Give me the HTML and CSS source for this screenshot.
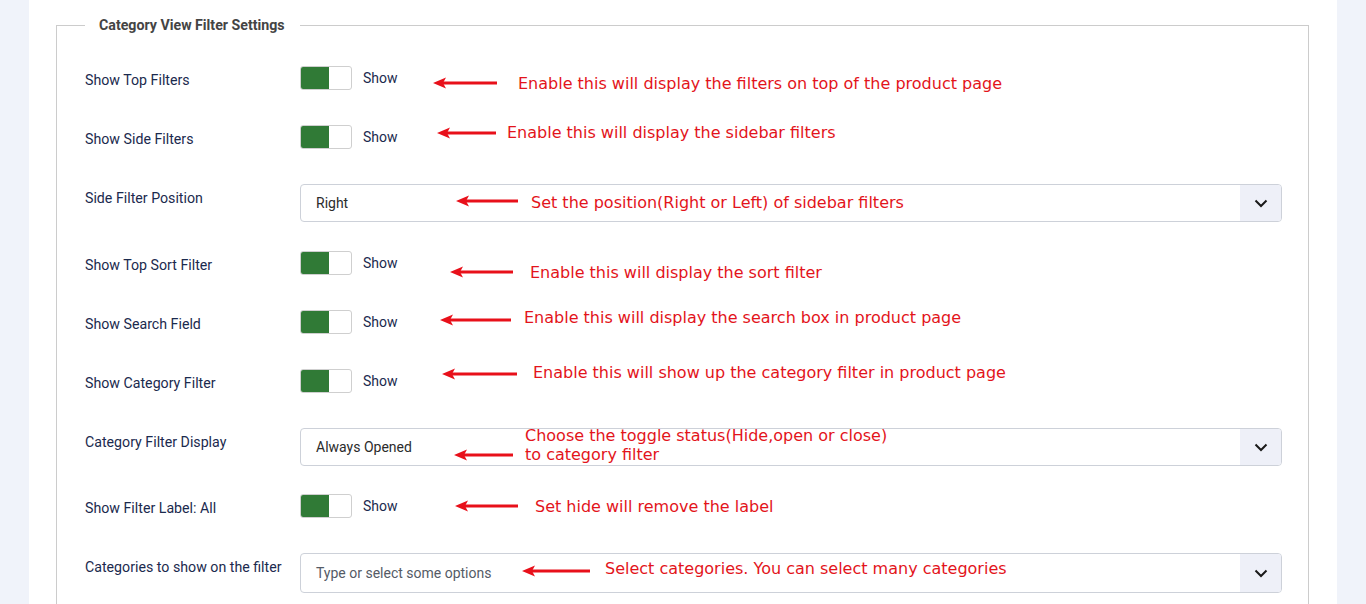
FILE: index.html
```html
<!DOCTYPE html>
<html lang="en">
<head>
<meta charset="utf-8">
<title>Category View Filter Settings</title>
<link rel="stylesheet" href="styles.css">
</head>
<body>
<div class="page">
  <div class="panel">
    <fieldset class="group">
      <legend>Category View Filter Settings</legend>

      <div class="row row-toggle">
        <div class="label">Show Top Filters</div>
        <div class="control"><span class="toggle"><span class="knob"></span></span><span class="state">Show</span></div>
      </div>
      <div class="row row-toggle">
        <div class="label">Show Side Filters</div>
        <div class="control"><span class="toggle"><span class="knob"></span></span><span class="state">Show</span></div>
      </div>
      <div class="row row-select row-select-first">
        <div class="label">Side Filter Position</div>
        <div class="select"><span class="value">Right</span><span class="caret"><svg width="14" height="9" viewBox="0 0 14 9"><path d="M1.5 1.5 L7 7 L12.5 1.5" fill="none" stroke="#1a1a1a" stroke-width="2"/></svg></span></div>
      </div>
      <div class="row row-toggle">
        <div class="label">Show Top Sort Filter</div>
        <div class="control"><span class="toggle"><span class="knob"></span></span><span class="state">Show</span></div>
      </div>
      <div class="row row-toggle">
        <div class="label">Show Search Field</div>
        <div class="control"><span class="toggle"><span class="knob"></span></span><span class="state">Show</span></div>
      </div>
      <div class="row row-toggle">
        <div class="label">Show Category Filter</div>
        <div class="control"><span class="toggle"><span class="knob"></span></span><span class="state">Show</span></div>
      </div>
      <div class="row row-select">
        <div class="label">Category Filter Display</div>
        <div class="select"><span class="value">Always Opened</span><span class="caret"><svg width="14" height="9" viewBox="0 0 14 9"><path d="M1.5 1.5 L7 7 L12.5 1.5" fill="none" stroke="#1a1a1a" stroke-width="2"/></svg></span></div>
      </div>
      <div class="row row-toggle">
        <div class="label">Show Filter Label: All</div>
        <div class="control"><span class="toggle"><span class="knob"></span></span><span class="state">Show</span></div>
      </div>
      <div class="row row-select">
        <div class="label">Categories to show on the filter</div>
        <div class="select select-multi"><span class="value placeholder">Type or select some options</span><span class="caret"><svg width="14" height="9" viewBox="0 0 14 9"><path d="M1.5 1.5 L7 7 L12.5 1.5" fill="none" stroke="#1a1a1a" stroke-width="2"/></svg></span></div>
      </div>
    </fieldset>
  </div>

  <div class="note n1"><svg class="arrow" width="64" height="12" viewBox="0 0 64 12"><path d="M0 6 L13 0.5 L10 6 L13 11.5 Z" fill="#e8101a"/><line x1="9" y1="6" x2="64" y2="6" stroke="#e8101a" stroke-width="3"/></svg><span class="t t1">Enable this will display the filters on top of the product page</span></div>
  <div class="note n2"><svg class="arrow" width="59" height="12" viewBox="0 0 59 12"><path d="M0 6 L13 0.5 L10 6 L13 11.5 Z" fill="#e8101a"/><line x1="9" y1="6" x2="59" y2="6" stroke="#e8101a" stroke-width="3"/></svg><span class="t t2">Enable this will display the sidebar filters</span></div>
  <div class="note n3"><svg class="arrow" width="62" height="12" viewBox="0 0 62 12"><path d="M0 6 L13 0.5 L10 6 L13 11.5 Z" fill="#e8101a"/><line x1="9" y1="6" x2="62" y2="6" stroke="#e8101a" stroke-width="3"/></svg><span class="t t3">Set the position(Right or Left) of sidebar filters</span></div>
  <div class="note n4"><svg class="arrow" width="63" height="12" viewBox="0 0 63 12"><path d="M0 6 L13 0.5 L10 6 L13 11.5 Z" fill="#e8101a"/><line x1="9" y1="6" x2="63" y2="6" stroke="#e8101a" stroke-width="3"/></svg><span class="t t4">Enable this will display the sort filter</span></div>
  <div class="note n5"><svg class="arrow" width="71" height="12" viewBox="0 0 71 12"><path d="M0 6 L13 0.5 L10 6 L13 11.5 Z" fill="#e8101a"/><line x1="9" y1="6" x2="71" y2="6" stroke="#e8101a" stroke-width="3"/></svg><span class="t t5">Enable this will display the search box in product page</span></div>
  <div class="note n6"><svg class="arrow" width="75" height="12" viewBox="0 0 75 12"><path d="M0 6 L13 0.5 L10 6 L13 11.5 Z" fill="#e8101a"/><line x1="9" y1="6" x2="75" y2="6" stroke="#e8101a" stroke-width="3"/></svg><span class="t t6">Enable this will show up the category filter in product page</span></div>
  <div class="note n7"><svg class="arrow" width="59" height="12" viewBox="0 0 59 12"><path d="M0 6 L13 0.5 L10 6 L13 11.5 Z" fill="#e8101a"/><line x1="9" y1="6" x2="59" y2="6" stroke="#e8101a" stroke-width="3"/></svg><span class="t t7">Choose the toggle status(Hide,open or close)<br>to category filter</span></div>
  <div class="note n8"><svg class="arrow" width="63" height="12" viewBox="0 0 63 12"><path d="M0 6 L13 0.5 L10 6 L13 11.5 Z" fill="#e8101a"/><line x1="9" y1="6" x2="63" y2="6" stroke="#e8101a" stroke-width="3"/></svg><span class="t t8">Set hide will remove the label</span></div>
  <div class="note n9"><svg class="arrow" width="68" height="12" viewBox="0 0 68 12"><path d="M0 6 L13 0.5 L10 6 L13 11.5 Z" fill="#e8101a"/><line x1="9" y1="6" x2="68" y2="6" stroke="#e8101a" stroke-width="3"/></svg><span class="t t9">Select categories. You can select many categories</span></div>
</div>
</body>
</html>
```

FILE: styles.css
```css
* { box-sizing: border-box; }
html, body { margin: 0; padding: 0; }
body {
  background: #f0f3fa;
  font-family: Roboto, "Liberation Sans", sans-serif;
  font-size: 14px;
  overflow: hidden;
}
.page {
  position: relative;
  height: 604px;
  padding: 0 29px;
}
.panel {
  display: flow-root;
  background: #ffffff;
  height: 604px;
  padding: 0 28px 0 27px;
}
.group {
  margin: 15px 0 0 0;
  border: 1px solid #cccccc;
  border-bottom: none;
  padding: 31px 26px 0 28px;
  min-width: 0;
}
.group legend {
  padding: 0 15px 0 14px;
  margin: 0;
  font-weight: 700;
  font-size: 14.2px;
  line-height: 20px;
  color: #444444;
}
.row {
  display: flex;
  align-items: flex-start;
}
.row-toggle { height: 59px; }
.row-select { height: 66px; }
.row-select-first { height: 67px; }
.label {
  width: 215px;
  flex: none;
  padding-top: 4px;
  font-size: 14.2px;
  line-height: 20px;
  color: #1b2a4e;
}
.control {
  display: flex;
  align-items: flex-start;
}
.toggle {
  display: block;
  width: 52px;
  height: 24px;
  border: 1px solid #cfcfcf;
  border-radius: 3px;
  background: #ffffff;
  overflow: hidden;
}
.knob {
  display: block;
  width: 28px;
  height: 100%;
  background: #307a36;
}
.state {
  margin-left: 11px;
  margin-top: 2px;
  line-height: 20px;
  color: #1b2a4e;
}
.select {
  flex: 1;
  display: flex;
  align-items: stretch;
  height: 38px;
  border: 1px solid #cdd1d9;
  border-radius: 4px;
  background: #ffffff;
  overflow: hidden;
}
.select-multi { height: 40px; }
.value {
  flex: 1;
  padding-left: 15px;
  display: flex;
  align-items: center;
  color: #2b2b2b;
}
.placeholder { color: #555b66; }
.caret {
  width: 41px;
  flex: none;
  background: #eef0f8;
  display: flex;
  align-items: center;
  justify-content: center;
}

/* annotation overlays */
.note {
  position: absolute;
  left: 0;
  top: 0;
}
.arrow { position: absolute; display: block; }
.t {
  position: absolute;
  white-space: nowrap;
  font-family: "DejaVu Sans", Verdana, sans-serif;
  font-size: 16px;
  line-height: 20px;
  color: #e3141b;
}
.n1 .arrow { left: 433px; top: 77px; }
.t1 { left: 518px; top: 74px; }
.n2 .arrow { left: 437px; top: 127px; }
.t2 { left: 507px; top: 123px; }
.n3 .arrow { left: 456px; top: 195px; }
.t3 { left: 531px; top: 193px; }
.n4 .arrow { left: 450px; top: 266px; }
.t4 { left: 530px; top: 263px; }
.n5 .arrow { left: 440px; top: 314px; }
.t5 { left: 524px; top: 308px; }
.n6 .arrow { left: 442px; top: 368px; }
.t6 { left: 533px; top: 363px; }
.n7 .arrow { left: 454px; top: 449px; }
.t7 { left: 525px; top: 426px; line-height: 19px; }
.n8 .arrow { left: 455px; top: 500px; }
.t8 { left: 535px; top: 497px; }
.n9 .arrow { left: 522px; top: 565px; }
.t9 { left: 605px; top: 559px; }
```
